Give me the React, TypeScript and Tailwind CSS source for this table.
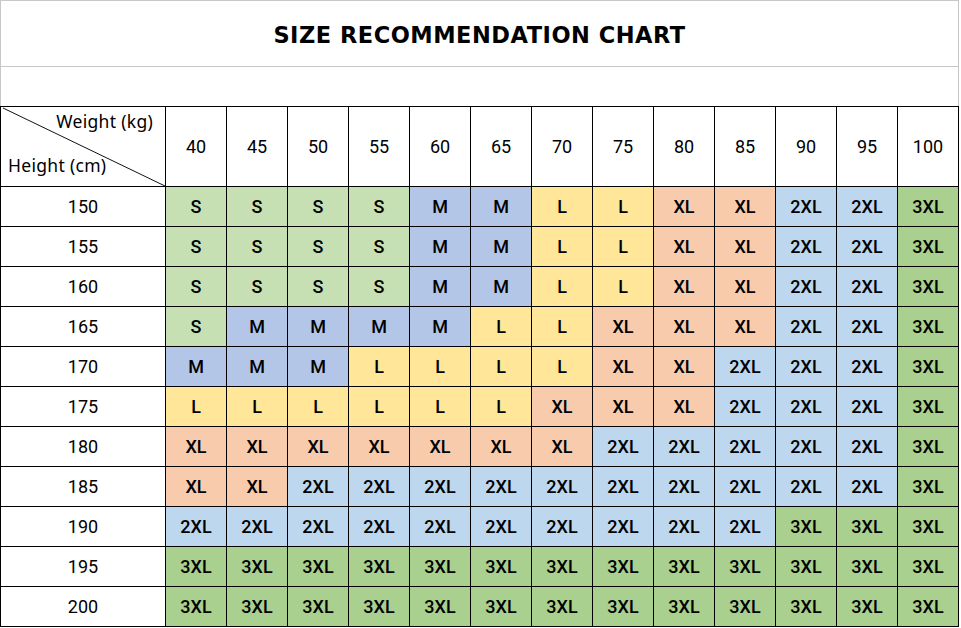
import React from "react";

const weights = [40, 45, 50, 55, 60, 65, 70, 75, 80, 85, 90, 95, 100];
const rows: [number, string[]][] = [
  [150, ["S", "S", "S", "S", "M", "M", "L", "L", "XL", "XL", "2XL", "2XL", "3XL"]],
  [155, ["S", "S", "S", "S", "M", "M", "L", "L", "XL", "XL", "2XL", "2XL", "3XL"]],
  [160, ["S", "S", "S", "S", "M", "M", "L", "L", "XL", "XL", "2XL", "2XL", "3XL"]],
  [165, ["S", "M", "M", "M", "M", "L", "L", "XL", "XL", "XL", "2XL", "2XL", "3XL"]],
  [170, ["M", "M", "M", "L", "L", "L", "L", "XL", "XL", "2XL", "2XL", "2XL", "3XL"]],
  [175, ["L", "L", "L", "L", "L", "L", "XL", "XL", "XL", "2XL", "2XL", "2XL", "3XL"]],
  [180, ["XL", "XL", "XL", "XL", "XL", "XL", "XL", "2XL", "2XL", "2XL", "2XL", "2XL", "3XL"]],
  [185, ["XL", "XL", "2XL", "2XL", "2XL", "2XL", "2XL", "2XL", "2XL", "2XL", "2XL", "2XL", "3XL"]],
  [190, ["2XL", "2XL", "2XL", "2XL", "2XL", "2XL", "2XL", "2XL", "2XL", "2XL", "3XL", "3XL", "3XL"]],
  [195, ["3XL", "3XL", "3XL", "3XL", "3XL", "3XL", "3XL", "3XL", "3XL", "3XL", "3XL", "3XL", "3XL"]],
  [200, ["3XL", "3XL", "3XL", "3XL", "3XL", "3XL", "3XL", "3XL", "3XL", "3XL", "3XL", "3XL", "3XL"]],
];

const bg: Record<string, string> = {
  S: "bg-[#c6e0b4]",
  M: "bg-[#b4c6e7]",
  L: "bg-[#ffe699]",
  XL: "bg-[#f8cbad]",
  "2XL": "bg-[#bdd7ee]",
  "3XL": "bg-[#a9d08e]",
};

export default function App() {
  return (
    <div className="w-[961px] h-[628px] bg-white overflow-hidden text-black">
      <div className="w-[959px] border-l border-r border-[#c8c8c8]">
        <div className="h-[67px] border-t border-b border-[#c8c8c8] flex items-center justify-center pt-[3px]">
          <span
            className="text-[22.5px] font-bold tracking-[0.5px] leading-none"
            style={{ fontFamily: '"DejaVu Sans", sans-serif' }}
          >
            SIZE RECOMMENDATION CHART
          </span>
        </div>
        <div className="h-[39px]" />
      </div>
      <div
        className="grid grid-cols-[165px_repeat(13,61px)] w-[959px] border-t border-l border-black"
        style={{ fontFamily: 'Roboto, "Liberation Sans", sans-serif' }}
      >
        <div className="relative h-[80px] border-r border-b border-black">
          <svg className="absolute inset-0 w-full h-full" preserveAspectRatio="none" viewBox="0 0 164 79">
            <line x1="2" y1="1" x2="164" y2="79" stroke="#111" strokeWidth="1" />
          </svg>
          <span
            className="absolute right-[12px] top-[6px] text-[17.5px] leading-none tracking-[0.3px]"
            style={{ fontFamily: '"Noto Sans", sans-serif' }}
          >
            Weight (kg)
          </span>
          <span
            className="absolute left-[7px] top-[50px] text-[17.5px] leading-none tracking-[0.3px]"
            style={{ fontFamily: '"Noto Sans", sans-serif' }}
          >
            Height (cm)
          </span>
        </div>
        {weights.map((w) => (
          <div key={w} className="h-[80px] border-r border-b border-black flex items-center justify-center text-[18px]">
            {w}
          </div>
        ))}
        {rows.map(([h, sizes]) => (
          <React.Fragment key={h}>
            <div className="h-[40px] border-r border-b border-black flex items-center justify-center text-[18px]">
              {h}
            </div>
            {sizes.map((s, i) => (
              <div
                key={i}
                className={`h-[40px] border-r border-b border-black flex items-center justify-center text-[18px] font-medium ${bg[s]}`}
              >
                {s}
              </div>
            ))}
          </React.Fragment>
        ))}
      </div>
    </div>
  );
}
